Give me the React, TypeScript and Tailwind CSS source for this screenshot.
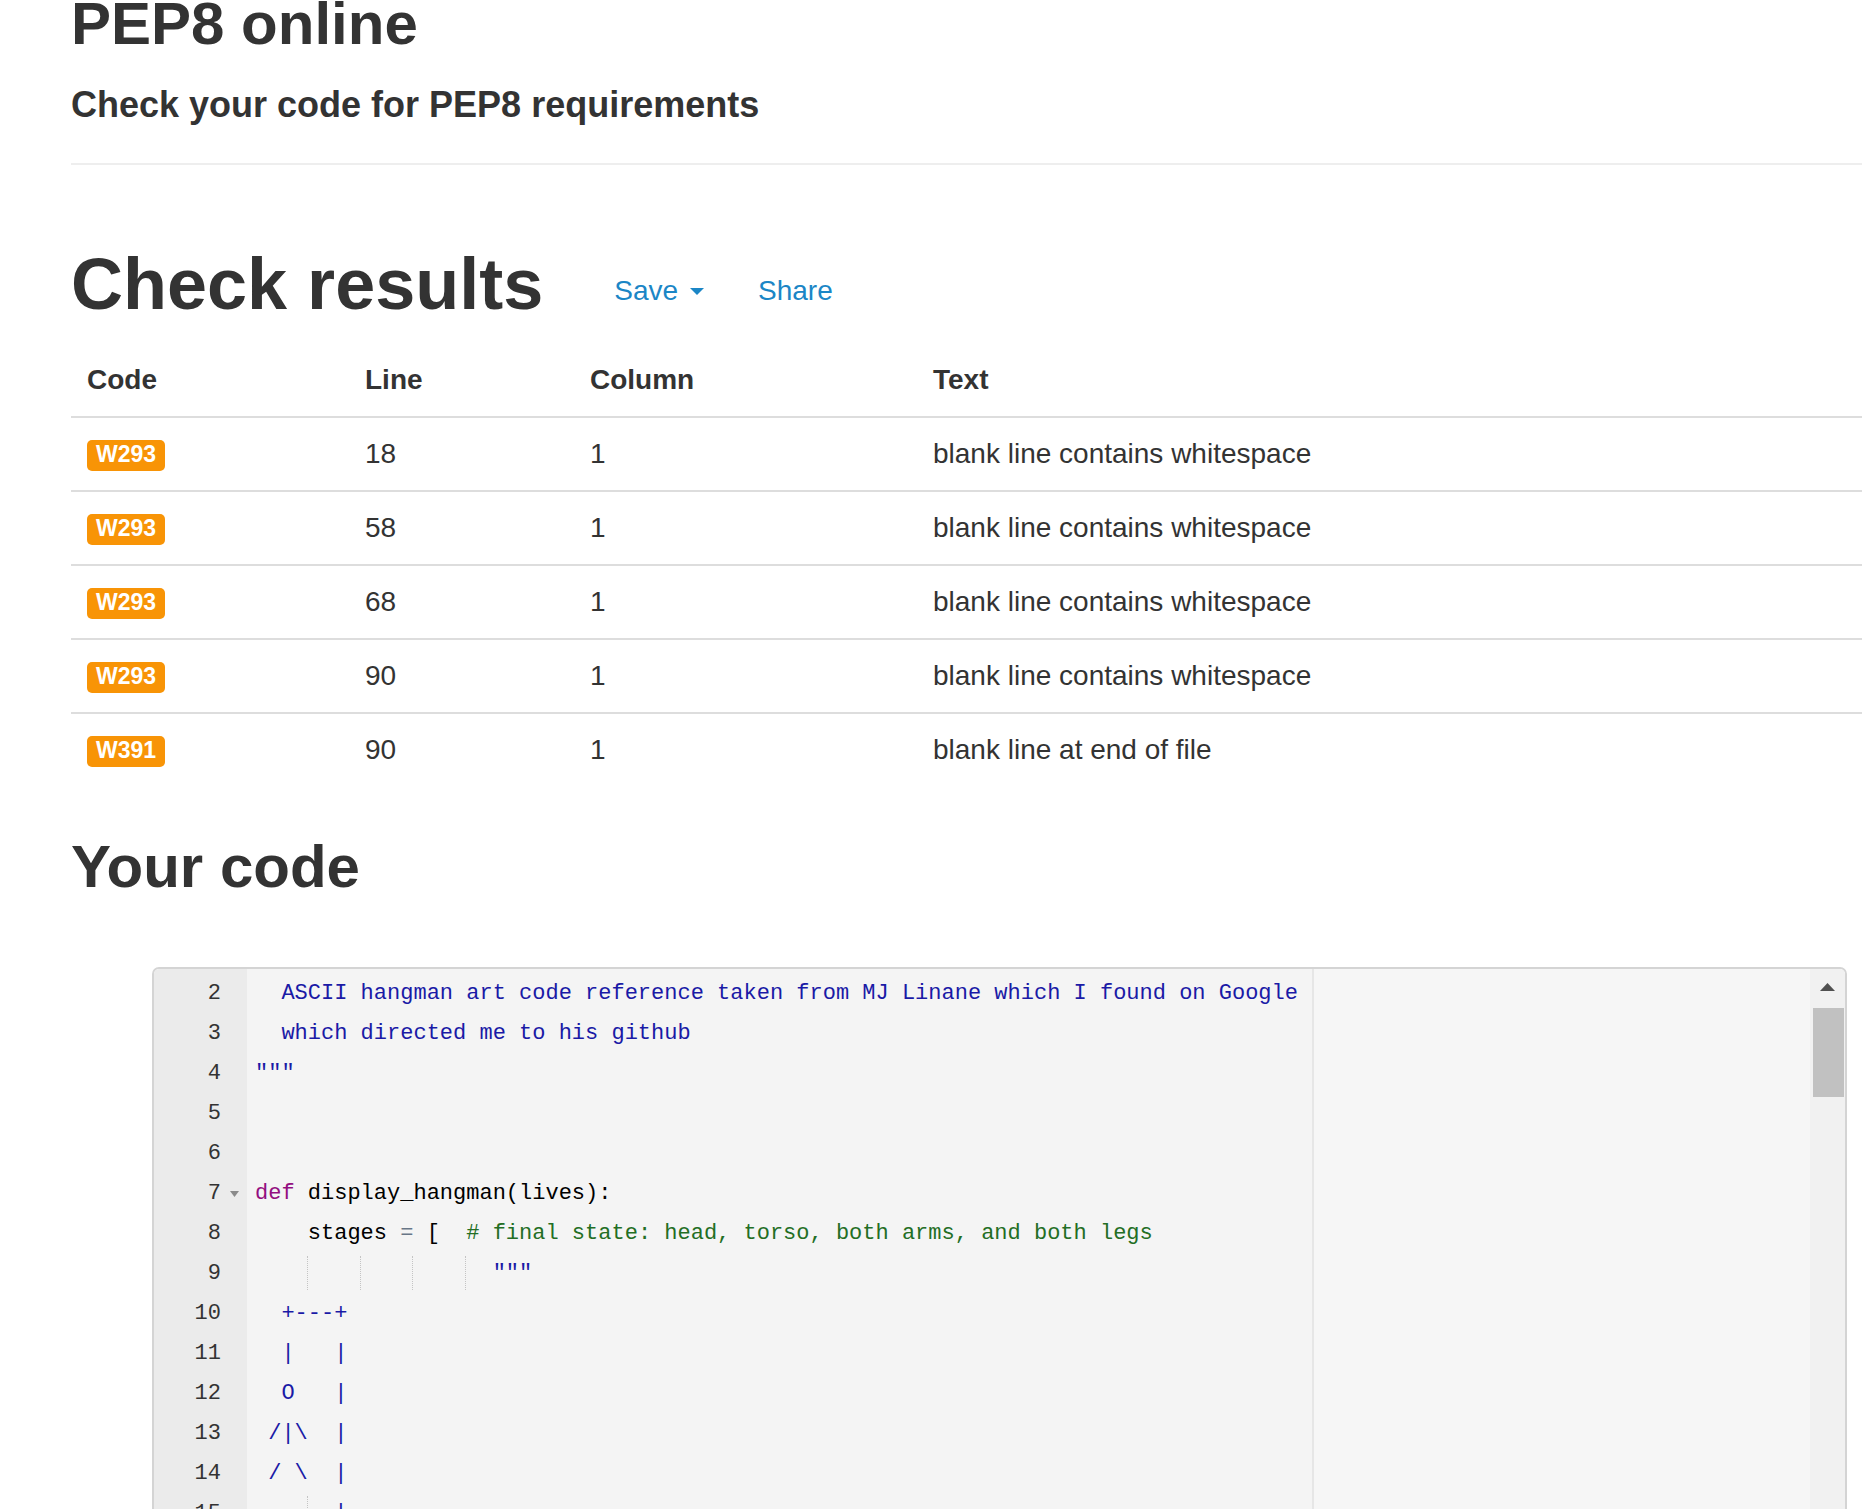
import React from 'react';

// token colours taken from the ace "chrome" theme
const STR = 'text-[#1a1aa6]';
const KW = 'text-[#930f80]';
const OP = 'text-[#687687]';
const COMMENT = 'text-[#236e24]';

type Tok = [string, string?];

interface CodeLine {
  n: number;
  lead?: number;
  fold?: boolean;
  toks: Tok[];
}

const results = [
  { code: 'W293', line: 18, col: 1, text: 'blank line contains whitespace' },
  { code: 'W293', line: 58, col: 1, text: 'blank line contains whitespace' },
  { code: 'W293', line: 68, col: 1, text: 'blank line contains whitespace' },
  { code: 'W293', line: 90, col: 1, text: 'blank line contains whitespace' },
  { code: 'W391', line: 90, col: 1, text: 'blank line at end of file' },
];

const codeLines: CodeLine[] = [
  { n: 2, toks: [['  ASCII hangman art code reference taken from MJ Linane which I found on Google', STR]] },
  { n: 3, toks: [['  which directed me to his github', STR]] },
  { n: 4, toks: [['"""', STR]] },
  { n: 5, toks: [] },
  { n: 6, toks: [] },
  { n: 7, fold: true, toks: [['def', KW], [' display_hangman(lives):']] },
  {
    n: 8,
    lead: 4,
    toks: [['stages '], ['=', OP], [' [  '], ['# final state: head, torso, both arms, and both legs', COMMENT]],
  },
  { n: 9, lead: 18, toks: [['"""', STR]] },
  { n: 10, toks: [['  +---+', STR]] },
  { n: 11, toks: [['  |   |', STR]] },
  { n: 12, toks: [['  O   |', STR]] },
  { n: 13, toks: [[' /|\\  |', STR]] },
  { n: 14, toks: [[' / \\  |', STR]] },
  { n: 15, lead: 6, toks: [['|', STR]] },
];

function Indent({ count }: { count: number }) {
  // first indent level has no guide, every following one gets a dotted line
  const groups: number[] = [];
  for (let i = 0; i < count; i += 4) groups.push(Math.min(4, count - i));
  return (
    <>
      {groups.map((g, i) =>
        i === 0 ? (
          <span key={i}>{' '.repeat(g)}</span>
        ) : (
          <span
            key={i}
            className="inline-block h-[34px] align-middle -ml-px border-l border-dotted border-[#c4c4c4]"
          >
            {' '.repeat(g)}
          </span>
        )
      )}
    </>
  );
}

function Editor() {
  return (
    <div className="ml-[81px] mr-[15px] mt-[67px] h-[600px] border-2 border-[#d4d4d4] rounded-[7px] overflow-hidden flex font-['Liberation_Mono',monospace] text-[22px]">
      {/* Gutter */}
      <div className="w-[93px] shrink-0 bg-[#ebebeb] pt-[5px] text-[#333]">
        {codeLines.map((l) => (
          <div key={l.n} className="h-[40px] leading-[40px] flex items-center">
            <span className="flex-1 text-right">{l.n}</span>
            <span className="w-[26px] flex justify-center">
              {l.fold && (
                <svg width="9" height="6" viewBox="0 0 9 6">
                  <path d="M0 0h9L4.5 6z" fill="#8a8a8a" />
                </svg>
              )}
            </span>
          </div>
        ))}
      </div>

      {/* Code */}
      <div className="flex-1 relative bg-[#f4f4f4] pt-[5px] pl-[8px] text-black">
        <div className="absolute top-0 bottom-0 left-[1065px] right-0 bg-[#f6f6f6] border-l-2 border-[#e6e6e6]" />
        <div className="relative">
          {codeLines.map((l) => (
            <div key={l.n} className="h-[40px] leading-[40px] whitespace-pre">
              {l.lead ? <Indent count={l.lead} /> : null}
              {l.toks.map(([t, c], i) => (
                <span key={i} className={c}>
                  {t}
                </span>
              ))}
            </div>
          ))}
        </div>
      </div>

      {/* Scrollbar */}
      <div className="w-[35px] shrink-0 bg-[#f1f1f1] flex flex-col">
        <div className="h-[36px] flex items-center justify-center">
          <svg width="15" height="8" viewBox="0 0 15 8">
            <path d="M0 8L7.5 0L15 8z" fill="#505050" />
          </svg>
        </div>
        <div className="mt-[3px] ml-[3px] mr-px h-[89px] bg-[#c1c1c1]" />
      </div>
    </div>
  );
}

export default function App() {
  return (
    <div className="w-[1862px] h-[1509px] overflow-hidden bg-white text-[#333] font-['Liberation_Sans',Arial,sans-serif]">
      <div className="pl-[71px]">
        <h2 className="-mt-[9px] text-[60px] leading-[66px] font-bold">PEP8 online</h2>
        <h4 className="mt-[28px] text-[36px] leading-[40px] font-bold">Check your code for PEP8 requirements</h4>
        <div className="mt-[38px] h-[2px] bg-[#eeeeee]" />

        <div className="mt-[79px] flex items-start">
          <h1 className="text-[72px] leading-[80px] font-bold">Check results</h1>
          <div className="ml-[71px] mt-[27px] flex items-center text-[28px] leading-[40px] text-[#1b86c6]">
            <span>Save</span>
            <svg className="ml-[12px]" width="14" height="7" viewBox="0 0 14 7">
              <path d="M0 0h14L7 7z" fill="#1b86c6" />
            </svg>
            <span className="ml-[54px]">Share</span>
          </div>
        </div>

        <table className="mt-[20px] w-full table-fixed border-collapse text-[28px] leading-[40px]">
          <colgroup>
            <col className="w-[278px]" />
            <col className="w-[225px]" />
            <col className="w-[343px]" />
            <col />
          </colgroup>
          <thead>
            <tr className="border-b-2 border-[#dddddd]">
              {['Code', 'Line', 'Column', 'Text'].map((h) => (
                <th key={h} className="px-[16px] py-[16px] text-left font-bold">
                  {h}
                </th>
              ))}
            </tr>
          </thead>
          <tbody>
            {results.map((r, i) => (
              <tr key={i} className={i === 0 ? '' : 'border-t-2 border-[#dddddd]'}>
                <td className="px-[16px] py-[16px]">
                  <span className="inline-block align-middle -mt-[1px] bg-[#f89406] text-white font-bold text-[23px] leading-none pt-[3px] pb-[5px] px-[9px] rounded-[5px]">
                    {r.code}
                  </span>
                </td>
                <td className="px-[16px] py-[16px]">{r.line}</td>
                <td className="px-[16px] py-[16px]">{r.col}</td>
                <td className="px-[16px] py-[16px]">{r.text}</td>
              </tr>
            ))}
          </tbody>
        </table>

        <h2 className="mt-[48px] text-[60px] leading-[66px] font-bold">Your code</h2>

        <Editor />
      </div>
    </div>
  );
}
